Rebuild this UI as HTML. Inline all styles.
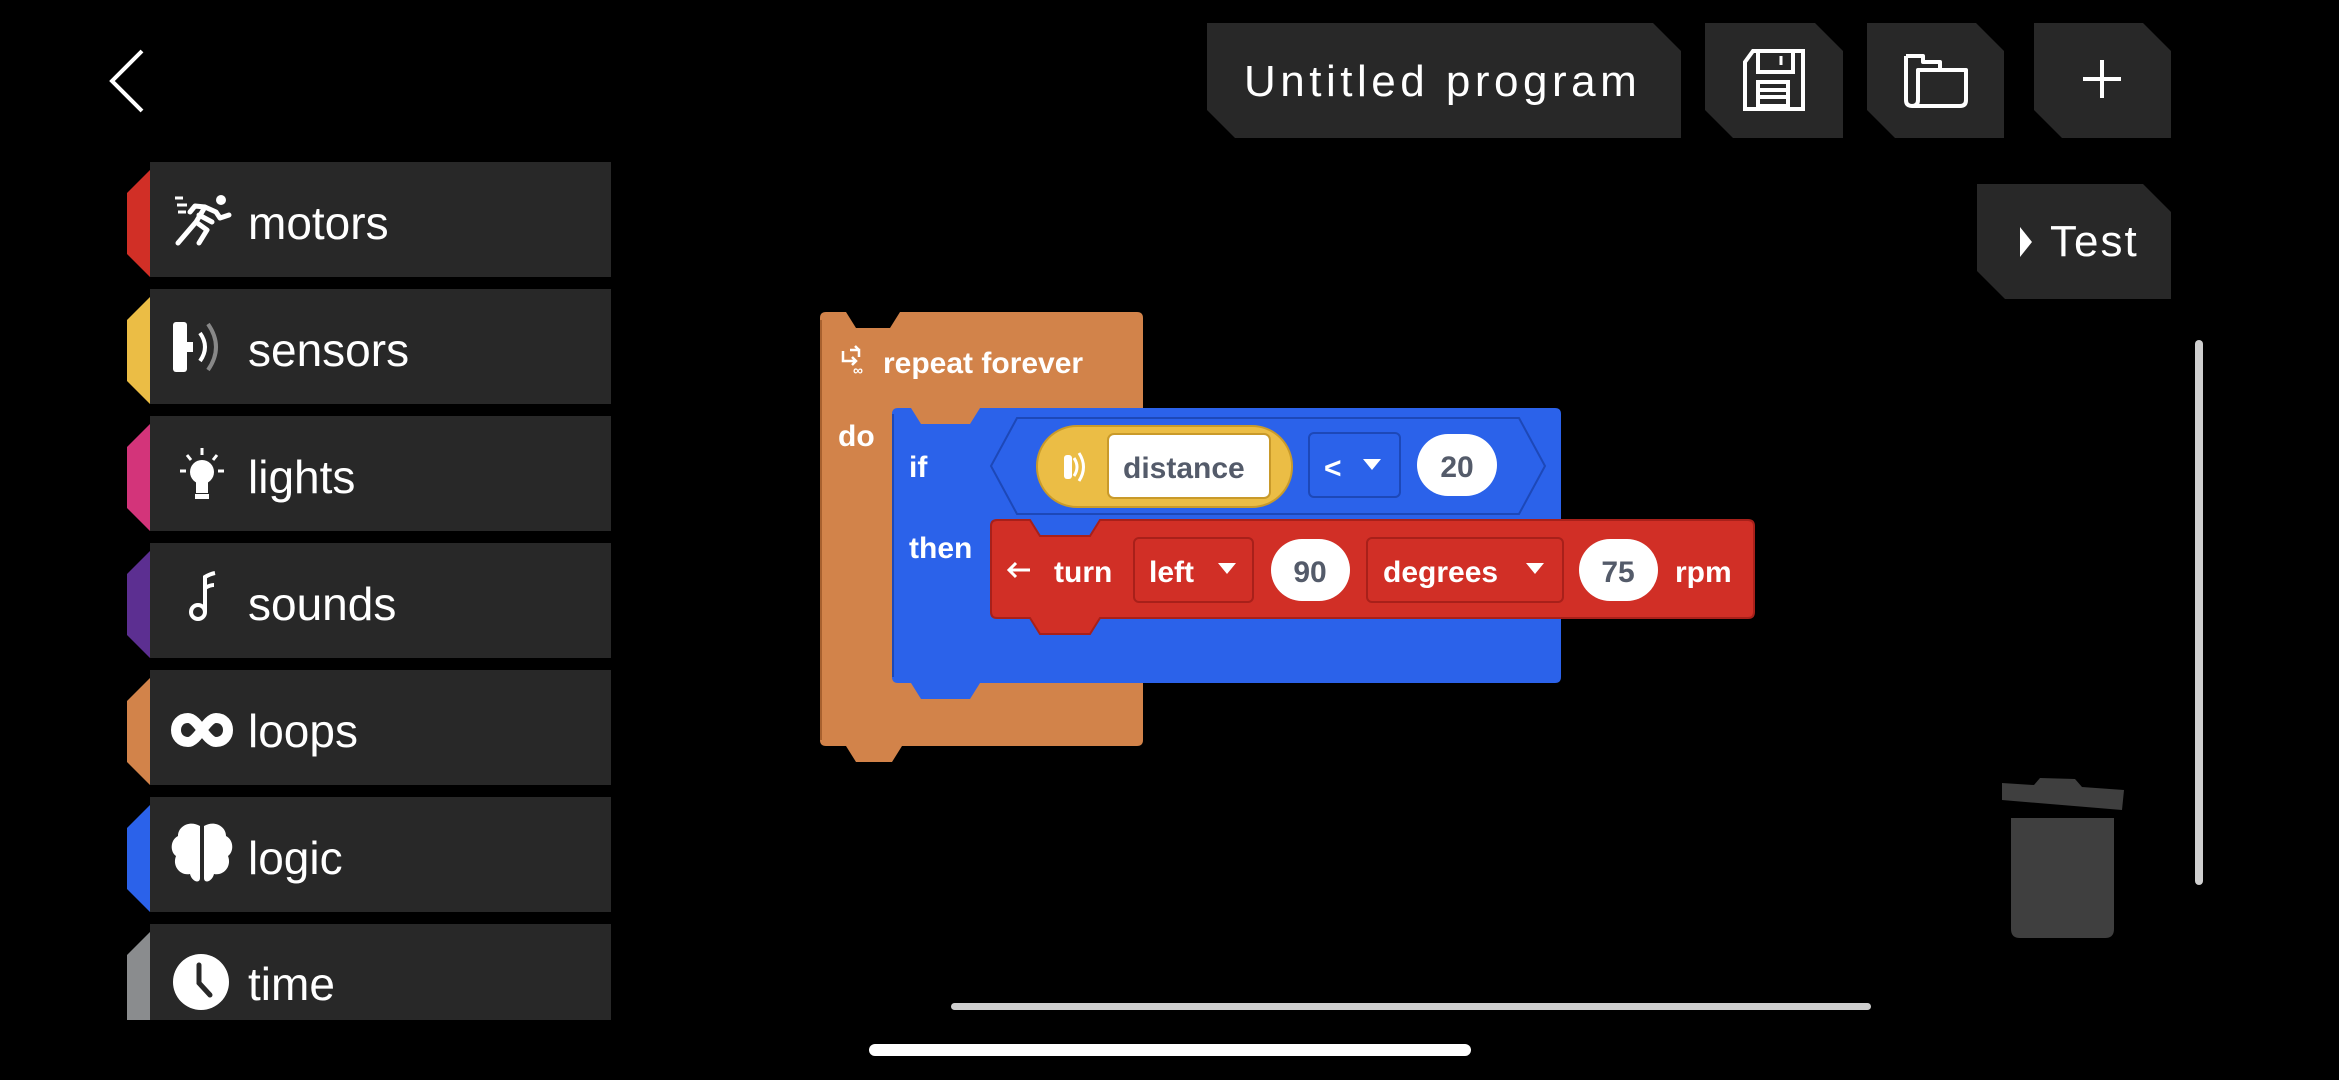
<!DOCTYPE html>
<html><head><meta charset="utf-8"><style>
html,body{margin:0;padding:0;background:#000;width:2339px;height:1080px;overflow:hidden}
svg{display:block}
text{font-family:"Liberation Sans",sans-serif}
</style></head><body>
<svg width="2339" height="1080" viewBox="0 0 2339 1080" xmlns="http://www.w3.org/2000/svg">
<path d="M142,51 L112,81 L142,111" fill="none" stroke="#fff" stroke-width="4"/>

<g>
<path d="M150,162 H611 V277 H150 Z" fill="#282828"/><path d="M150,170 V277 L127,254 V193 Z" fill="#d12f26"/>
<path d="M150,289 H611 V404 H150 Z" fill="#282828"/><path d="M150,297 V404 L127,381 V320 Z" fill="#ebbd45"/>
<path d="M150,416 H611 V531 H150 Z" fill="#282828"/><path d="M150,424 V531 L127,508 V447 Z" fill="#d3347a"/>
<path d="M150,543 H611 V658 H150 Z" fill="#282828"/><path d="M150,551 V658 L127,635 V574 Z" fill="#5c2f91"/>
<path d="M150,670 H611 V785 H150 Z" fill="#282828"/><path d="M150,678 V785 L127,762 V701 Z" fill="#d2834a"/>
<path d="M150,797 H611 V912 H150 Z" fill="#282828"/><path d="M150,805 V912 L127,889 V828 Z" fill="#2b62ea"/>
<path d="M150,924 H611 V1020 H150 Z" fill="#282828"/><path d="M150,932 V1020 L127,1020 V955 Z" fill="#8a8c8e"/>
</g>
<g fill="#fff" font-size="46">
<text x="248" y="239">motors</text>
<text x="248" y="366">sensors</text>
<text x="248" y="493">lights</text>
<text x="248" y="620">sounds</text>
<text x="248" y="747">loops</text>
<text x="248" y="874">logic</text>
<text x="248" y="1000">time</text>
</g>
<g fill="#fff" stroke="#fff">
<circle cx="221" cy="200" r="5" stroke="none"/>
<path d="M178,243 L196,222 L207,230 L199,243 M196,222 L205,207 L216,212 L220,218 L229,215 M205,207 L195,206 L190,212 M199,215 L212,222" fill="none" stroke-width="5" stroke-linecap="round" stroke-linejoin="round"/>
<path d="M175,198 H183 M177,205 H187 M178,212 H186" stroke-width="3"/>
<rect x="173" y="322" width="14" height="50" rx="3" stroke="none"/>
<rect x="187" y="342" width="6" height="10" stroke="none"/>
<path d="M200,333 Q210,347 200,361" fill="none" stroke-width="4"/>
<path d="M208,324 Q224,347 208,370" fill="none" stroke="#888" stroke-width="4"/>
<circle cx="202" cy="472" r="12" stroke="none"/>
<rect x="196" y="481" width="12" height="12" stroke="none"/>
<rect x="195" y="494" width="14" height="5" stroke="none"/>
<path d="M202,448 V455 M187,455 L191,460 M217,455 L213,460 M180,471 H186 M218,471 H224" stroke-width="3"/>
<circle cx="198" cy="612" r="7" fill="none" stroke-width="4"/>
<path d="M205,612 V577 Q210,574 215,573 M205,588 Q210,585 214,585" fill="none" stroke-width="4"/>
<path d="M188,718 C172,718 172,742 188,742 C198,742 206,718 216,718 C232,718 232,742 216,742 C206,742 198,718 188,718 Z" fill="none" stroke-width="10"/>
<path d="M200,826 C190,820 178,826 178,836 C170,840 170,852 176,856 C172,866 180,876 190,874 C192,882 200,884 200,878 Z M204,826 C214,820 226,826 226,836 C234,840 234,852 228,856 C232,866 224,876 214,874 C212,882 204,884 204,878 Z" stroke="none"/>
<circle cx="201" cy="982" r="28" stroke="none"/>
<path d="M199,965 V983 L210,995" fill="none" stroke="#282828" stroke-width="5" stroke-linecap="round"/>
</g>

<path d="M1207,23 H1653 L1681,51 V138 H1235 L1207,110 Z" fill="#282828"/>
<text x="1244" y="96" fill="#fff" font-size="44" letter-spacing="4.5">Untitled program</text>
<path d="M1705,23 H1815 L1843,51 V138 H1733 L1705,110 Z" fill="#282828"/>
<path d="M1867,23 H1976 L2004,51 V138 H1895 L1867,110 Z" fill="#282828"/>
<path d="M2034,23 H2143 L2171,51 V138 H2062 L2034,110 Z" fill="#282828"/>
<path d="M1977,184 H2143 L2171,212 V299 H2005 L1977,271 Z" fill="#282828"/>
<g fill="none" stroke="#fff" stroke-width="4">
<path d="M1753,51 H1803 V109 H1745 V62 Z"/>
<path d="M1758,51 V72 H1793 V51"/>
<rect x="1758" y="82" width="30" height="24"/>
<path d="M1760,90 H1787 M1760,97 H1787"/>
<path d="M1781,56 V65" stroke-width="3"/>
</g>
<g fill="none" stroke="#fff" stroke-width="4" stroke-linejoin="round">
<path d="M1906,56 H1923 V62 H1940 V70"/>
<path d="M1906,56 V100 Q1906,106 1912,106 H1960 Q1966,106 1966,100 V70 H1918 V100 Q1918,106 1912,106"/>
</g>
<path d="M2102,60 V98 M2083,79 H2121" stroke="#fff" stroke-width="4"/>
<path d="M2020,227 L2032,242 L2020,257 Z" fill="#fff"/>
<text x="2050" y="256" fill="#fff" font-size="44" letter-spacing="2">Test</text>

<g font-weight="bold" font-size="30" fill="#fff">
<path d="M820,318 Q820,312 826,312 H846 L856,328 H890 L900,312 H1137 Q1143,312 1143,318 V740 Q1143,746 1137,746 H902 L892,762 H856 L846,746 H826 Q820,746 820,740 Z" fill="#d2834a"/>
<path d="M821,320 V740" stroke="#a8612f" stroke-width="2"/>
<path d="M843,351 V361 H856 M852,357 L856,361 L852,365 M850,350 H859 V357 M855,346 L859,350" fill="none" stroke="#fff" stroke-width="2.5"/>
<text x="853" y="375" font-size="14">∞</text>
<text x="883" y="373">repeat forever</text>
<text x="838" y="446">do</text>
<path d="M892,414 Q892,408 898,408 H911 L921,424 H970 L980,408 H1555 Q1561,408 1561,414 V677 Q1561,683 1555,683 H980 L970,699 H921 L911,683 H898 Q892,683 892,677 Z" fill="#2b62ea"/>
<path d="M893,414 V677" stroke="#1d48b8" stroke-width="2"/>
<text x="909" y="477">if</text>
<text x="909" y="558">then</text>
<path d="M1017,418 H1519 L1545,466 L1519,514 H1017 L991,466 Z" fill="#2b62ea" stroke="#1d48b8" stroke-width="2"/>
<rect x="1037" y="426" width="255" height="81" rx="40" fill="#ebbd45" stroke="#c99a2a" stroke-width="2"/>
<rect x="1108" y="434" width="162" height="64" rx="6" fill="#fff" stroke="#c99a2a" stroke-width="2"/>
<text x="1123" y="478" fill="#545b6a">distance</text>
<rect x="1064" y="455" width="8" height="24" rx="3" fill="#fff"/>
<path d="M1074,458 Q1080,467 1074,476 M1079,453 Q1088,467 1079,481" fill="none" stroke="#fff" stroke-width="3"/>
<rect x="1309" y="433" width="91" height="64" rx="5" fill="#2b62ea" stroke="#1d48b8" stroke-width="2"/>
<text x="1324" y="478">&lt;</text>
<path d="M1363,459 H1381 L1372,470 Z" fill="#fff"/>
<rect x="1417" y="434" width="80" height="62" rx="31" fill="#fff"/>
<text x="1457" y="477" text-anchor="middle" fill="#545b6a">20</text>
<path d="M991,526 Q991,520 997,520 H1030 L1040,536 H1090 L1100,520 H1748 Q1754,520 1754,526 V612 Q1754,618 1748,618 H1100 L1090,634 H1040 L1030,618 H997 Q991,618 991,612 Z" fill="#d12f26" stroke="#a8201a" stroke-width="2"/>
<path d="M1030,570 H1010 M1016,563 L1009,570 L1016,577" fill="none" stroke="#fff" stroke-width="3"/>
<text x="1054" y="582">turn</text>
<rect x="1134" y="538" width="119" height="64" rx="5" fill="#d12f26" stroke="#a8201a" stroke-width="2"/>
<text x="1149" y="582">left</text>
<path d="M1218,563 H1236 L1227,574 Z" fill="#fff"/>
<rect x="1271" y="539" width="79" height="62" rx="31" fill="#fff"/>
<text x="1310" y="582" text-anchor="middle" fill="#545b6a">90</text>
<rect x="1367" y="538" width="196" height="64" rx="5" fill="#d12f26" stroke="#a8201a" stroke-width="2"/>
<text x="1383" y="582">degrees</text>
<path d="M1526,563 H1544 L1535,574 Z" fill="#fff"/>
<rect x="1579" y="539" width="79" height="62" rx="31" fill="#fff"/>
<text x="1618" y="582" text-anchor="middle" fill="#545b6a">75</text>
<text x="1675" y="582">rpm</text>
</g>

<path d="M2002,783 L2034,785 L2040,778 L2075,779 L2082,787 L2124,790 L2122,810 L2002,800 Z" fill="#3f3f3f"/>
<path d="M2011,818 H2114 V929 Q2114,938 2105,938 H2020 Q2011,938 2011,929 Z" fill="#3f3f3f"/>

<rect x="2195" y="340" width="8" height="545" rx="4" fill="#cfcfcf"/>
<rect x="951" y="1003" width="920" height="7" rx="3.5" fill="#cfcfcf"/>
<rect x="869" y="1044" width="602" height="12" rx="6" fill="#fff"/>
</svg>
</body></html>
